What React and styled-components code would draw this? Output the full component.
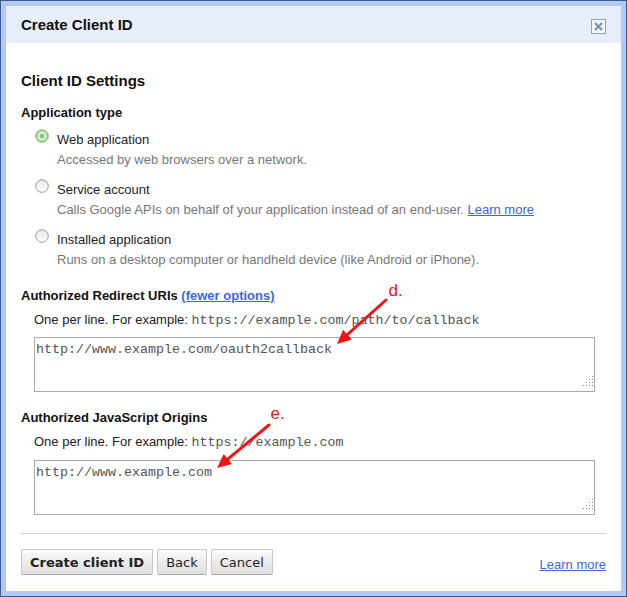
import React from "react";
import styled, { createGlobalStyle } from "styled-components";

const Global = createGlobalStyle`
  html, body { margin: 0; padding: 0; background: #fff; }
  body { font-family: "Liberation Sans", Arial, sans-serif; }
`;

const Dialog = styled.div`
  position: relative;
  box-sizing: border-box;
  width: 627px;
  height: 597px;
  border: 1px solid #3a5b8c;
  background: #b3c8f5;
  padding: 5px;
  display: flex;
`;

const Panel = styled.div`
  flex: 1;
  min-width: 0;
  background: #fff;
  display: flex;
  flex-direction: column;
`;

const Header = styled.div`
  flex-shrink: 0;
  box-sizing: border-box;
  height: 37px;
  padding: 0 15px;
  background: #e8eef9;
  display: flex;
  align-items: center;
  justify-content: space-between;
`;

const Title = styled.h1`
  margin: 0;
  font-size: 15px;
  line-height: 18px;
  font-weight: 700;
  color: #111;
`;

const CloseButton = styled.div`
  box-sizing: border-box;
  width: 15px;
  height: 15px;
  margin-top: 4px;
  border: 1px solid #8aa2c3;
  background: #f3f6fb;
  display: flex;
  align-items: center;
  justify-content: center;
`;

const Body = styled.div`
  flex: 1;
  padding: 0 15px;
  display: flex;
  flex-direction: column;
`;

const SectionTitle = styled.h2`
  margin: 29px 0 0;
  font-size: 15px;
  line-height: 18px;
  font-weight: 700;
  color: #111;
`;

const FieldLabel = styled.div`
  margin-top: ${(p) => p.$top || 0}px;
  height: 16px;
  font-size: 13px;
  line-height: 16px;
  font-weight: 700;
  color: #111;
`;

const RadioList = styled.div`
  margin-top: 11px;
  display: flex;
  flex-direction: column;
  gap: 14px;
`;

const RadioItem = styled.div`
  display: flex;
  align-items: flex-start;
  gap: 8px;
  padding-left: 14px;
`;

const RadioIcon = styled.svg`
  flex-shrink: 0;
  width: 14px;
  height: 14px;
  margin-top: -2.5px;
`;

const RadioText = styled.div`
  display: flex;
  flex-direction: column;
  gap: 4px;
`;

const RadioLabel = styled.div`
  font-size: 13px;
  line-height: 16px;
  color: #222;
`;

const RadioDesc = styled.div`
  font-size: 13px;
  line-height: 16px;
  color: #777;
`;

const Link = styled.a`
  color: #3d67dc;
  text-decoration: underline;
  cursor: pointer;
  font-weight: ${(p) => (p.$bold ? 700 : 400)};
`;

const Help = styled.div`
  margin-top: 8px;
  padding-left: 13px;
  height: 16px;
  font-size: 13px;
  line-height: 16px;
  color: #222;
`;

const Mono = styled.span`
  font-family: "Liberation Mono", "Courier New", monospace;
  font-size: 13.33px;
  line-height: 1;
  color: #555;
`;

const AreaWrap = styled.div`
  position: relative;
  margin: 9.5px 0 0 13px;
  width: 561px;
  height: 55px;
`;

const TextArea = styled.textarea`
  box-sizing: border-box;
  display: block;
  width: 100%;
  height: 100%;
  margin: 0;
  padding: 4px 2px 0 1px;
  border: 1px solid #aaa;
  border-radius: 0;
  outline: none;
  resize: none;
  font-family: "Liberation Mono", "Courier New", monospace;
  font-size: 13.33px;
  line-height: 16px;
  color: #555;
  background: #fff;
`;

const Grip = styled.svg`
  position: absolute;
  right: 2px;
  bottom: 6px;
  width: 10px;
  height: 10px;
  pointer-events: none;
`;

const Separator = styled.div`
  margin-top: 18.5px;
  height: 1px;
  background: #c7d2ea;
`;

const Footer = styled.div`
  margin-top: 15.3px;
  display: flex;
  justify-content: space-between;
  align-items: flex-end;
`;

const ButtonRow = styled.div`
  display: flex;
  gap: 4px;
`;

const Button = styled.button`
  box-sizing: border-box;
  height: 26px;
  margin: 0;
  padding: 0 8px;
  font-family: "DejaVu Sans", Verdana, sans-serif;
  font-size: 13px;
  font-weight: ${(p) => (p.$primary ? 700 : 400)};
  color: #222;
  border: 1px solid #c8c8c8;
  border-bottom-color: #a9a9a9;
  border-radius: 2px;
  background: linear-gradient(#fbfbfb, #dedede);
  cursor: pointer;
`;

const FooterLink = styled(Link)`
  font-size: 13px;
  line-height: 16px;
  margin-bottom: 2px;
`;

const Annotation = styled.span`
  position: absolute;
  left: ${(p) => p.$x}px;
  top: ${(p) => p.$y}px;
  font-size: 17px;
  line-height: 17px;
  color: #f01414;
  pointer-events: none;
`;

const Overlay = styled.svg`
  position: absolute;
  left: 0;
  top: 0;
  width: 627px;
  height: 597px;
  pointer-events: none;
`;

function Radio({ checked }) {
  if (checked) {
    return (
      <RadioIcon viewBox="0 0 14 14">
        <circle cx="7" cy="7" r="6.3" fill="#a9d59b" stroke="#86b97a" strokeWidth="1" />
        <circle cx="7" cy="7" r="4" fill="#f4fbf1" />
        <circle cx="7" cy="7" r="2.6" fill="#8cc67c" />
      </RadioIcon>
    );
  }
  return (
    <RadioIcon viewBox="0 0 14 14">
      <defs>
        <linearGradient id="rg" x1="0" y1="0" x2="0" y2="1">
          <stop offset="0" stopColor="#e6e6e6" />
          <stop offset="1" stopColor="#ffffff" />
        </linearGradient>
      </defs>
      <circle cx="7" cy="7" r="6.3" fill="url(#rg)" stroke="#9a9a9a" strokeWidth="1" />
    </RadioIcon>
  );
}

function GripDots() {
  const dots = [];
  for (let r = 0; r < 4; r++) {
    for (let c = 3 - r; c < 4; c++) {
      dots.push(<rect key={`${r}-${c}`} x={c * 3} y={r * 3} width="1" height="1" fill="#888" />);
    }
  }
  return <Grip viewBox="0 0 10 10">{dots}</Grip>;
}

function Arrow({ x1, y1, x2, y2 }) {
  const dx = x2 - x1;
  const dy = y2 - y1;
  const len = Math.hypot(dx, dy);
  const ux = dx / len;
  const uy = dy / len;
  const hl = 14;
  const hw = 6.5;
  const bx = x2 - ux * hl;
  const by = y2 - uy * hl;
  const px = -uy;
  const py = ux;
  const pts = `${x2},${y2} ${bx + px * hw},${by + py * hw} ${bx - px * hw},${by - py * hw}`;
  return (
    <g>
      <line x1={x1} y1={y1} x2={bx + ux * 2} y2={by + uy * 2} stroke="#f01414" strokeWidth="3" strokeLinecap="round" />
      <polygon points={pts} fill="#f01414" />
    </g>
  );
}

const options = [
  { label: "Web application", desc: "Accessed by web browsers over a network.", checked: true },
  { label: "Service account", desc: "Calls Google APIs on behalf of your application instead of an end-user.", link: true },
  { label: "Installed application", desc: "Runs on a desktop computer or handheld device (like Android or iPhone)." },
];

export default function App() {
  return (
    <>
      <Global />
      <Dialog>
        <Panel>
          <Header>
            <Title>Create Client ID</Title>
            <CloseButton>
              <svg width="13" height="13" viewBox="0 0 13 13">
                <path d="M3 3 L10 10 M10 3 L3 10" stroke="#7391b8" strokeWidth="2" />
              </svg>
            </CloseButton>
          </Header>
          <Body>
            <SectionTitle>Client ID Settings</SectionTitle>
            <FieldLabel $top={14.5}>Application type</FieldLabel>
            <RadioList>
              {options.map((o) => (
                <RadioItem key={o.label}>
                  <Radio checked={o.checked} />
                  <RadioText>
                    <RadioLabel>{o.label}</RadioLabel>
                    <RadioDesc>
                      {o.desc}
                      {o.link && (
                        <>
                          {" "}
                          <Link>Learn more</Link>
                        </>
                      )}
                    </RadioDesc>
                  </RadioText>
                </RadioItem>
              ))}
            </RadioList>

            <FieldLabel $top={20}>
              Authorized Redirect URIs <Link $bold>(fewer options)</Link>
            </FieldLabel>
            <Help>
              One per line. For example: <Mono>https://example.com/path/to/callback</Mono>
            </Help>
            <AreaWrap>
              <TextArea defaultValue="http://www.example.com/oauth2callback" />
              <GripDots />
            </AreaWrap>

            <FieldLabel $top={18}>Authorized JavaScript Origins</FieldLabel>
            <Help>
              One per line. For example: <Mono>https://example.com</Mono>
            </Help>
            <AreaWrap>
              <TextArea defaultValue="http://www.example.com" />
              <GripDots />
            </AreaWrap>

            <Separator />
            <Footer>
              <ButtonRow>
                <Button $primary>Create client ID</Button>
                <Button>Back</Button>
                <Button>Cancel</Button>
              </ButtonRow>
              <FooterLink>Learn more</FooterLink>
            </Footer>
          </Body>
        </Panel>
        <Annotation $x={387.5} $y={281.3}>d.</Annotation>
        <Annotation $x={269.5} $y={403.9}>e.</Annotation>
        <Overlay viewBox="0 0 627 597">
          <Arrow x1={385} y1={299} x2={336} y2={343} />
          <Arrow x1={268} y1={424} x2={216} y2={467} />
        </Overlay>
      </Dialog>
    </>
  );
}
